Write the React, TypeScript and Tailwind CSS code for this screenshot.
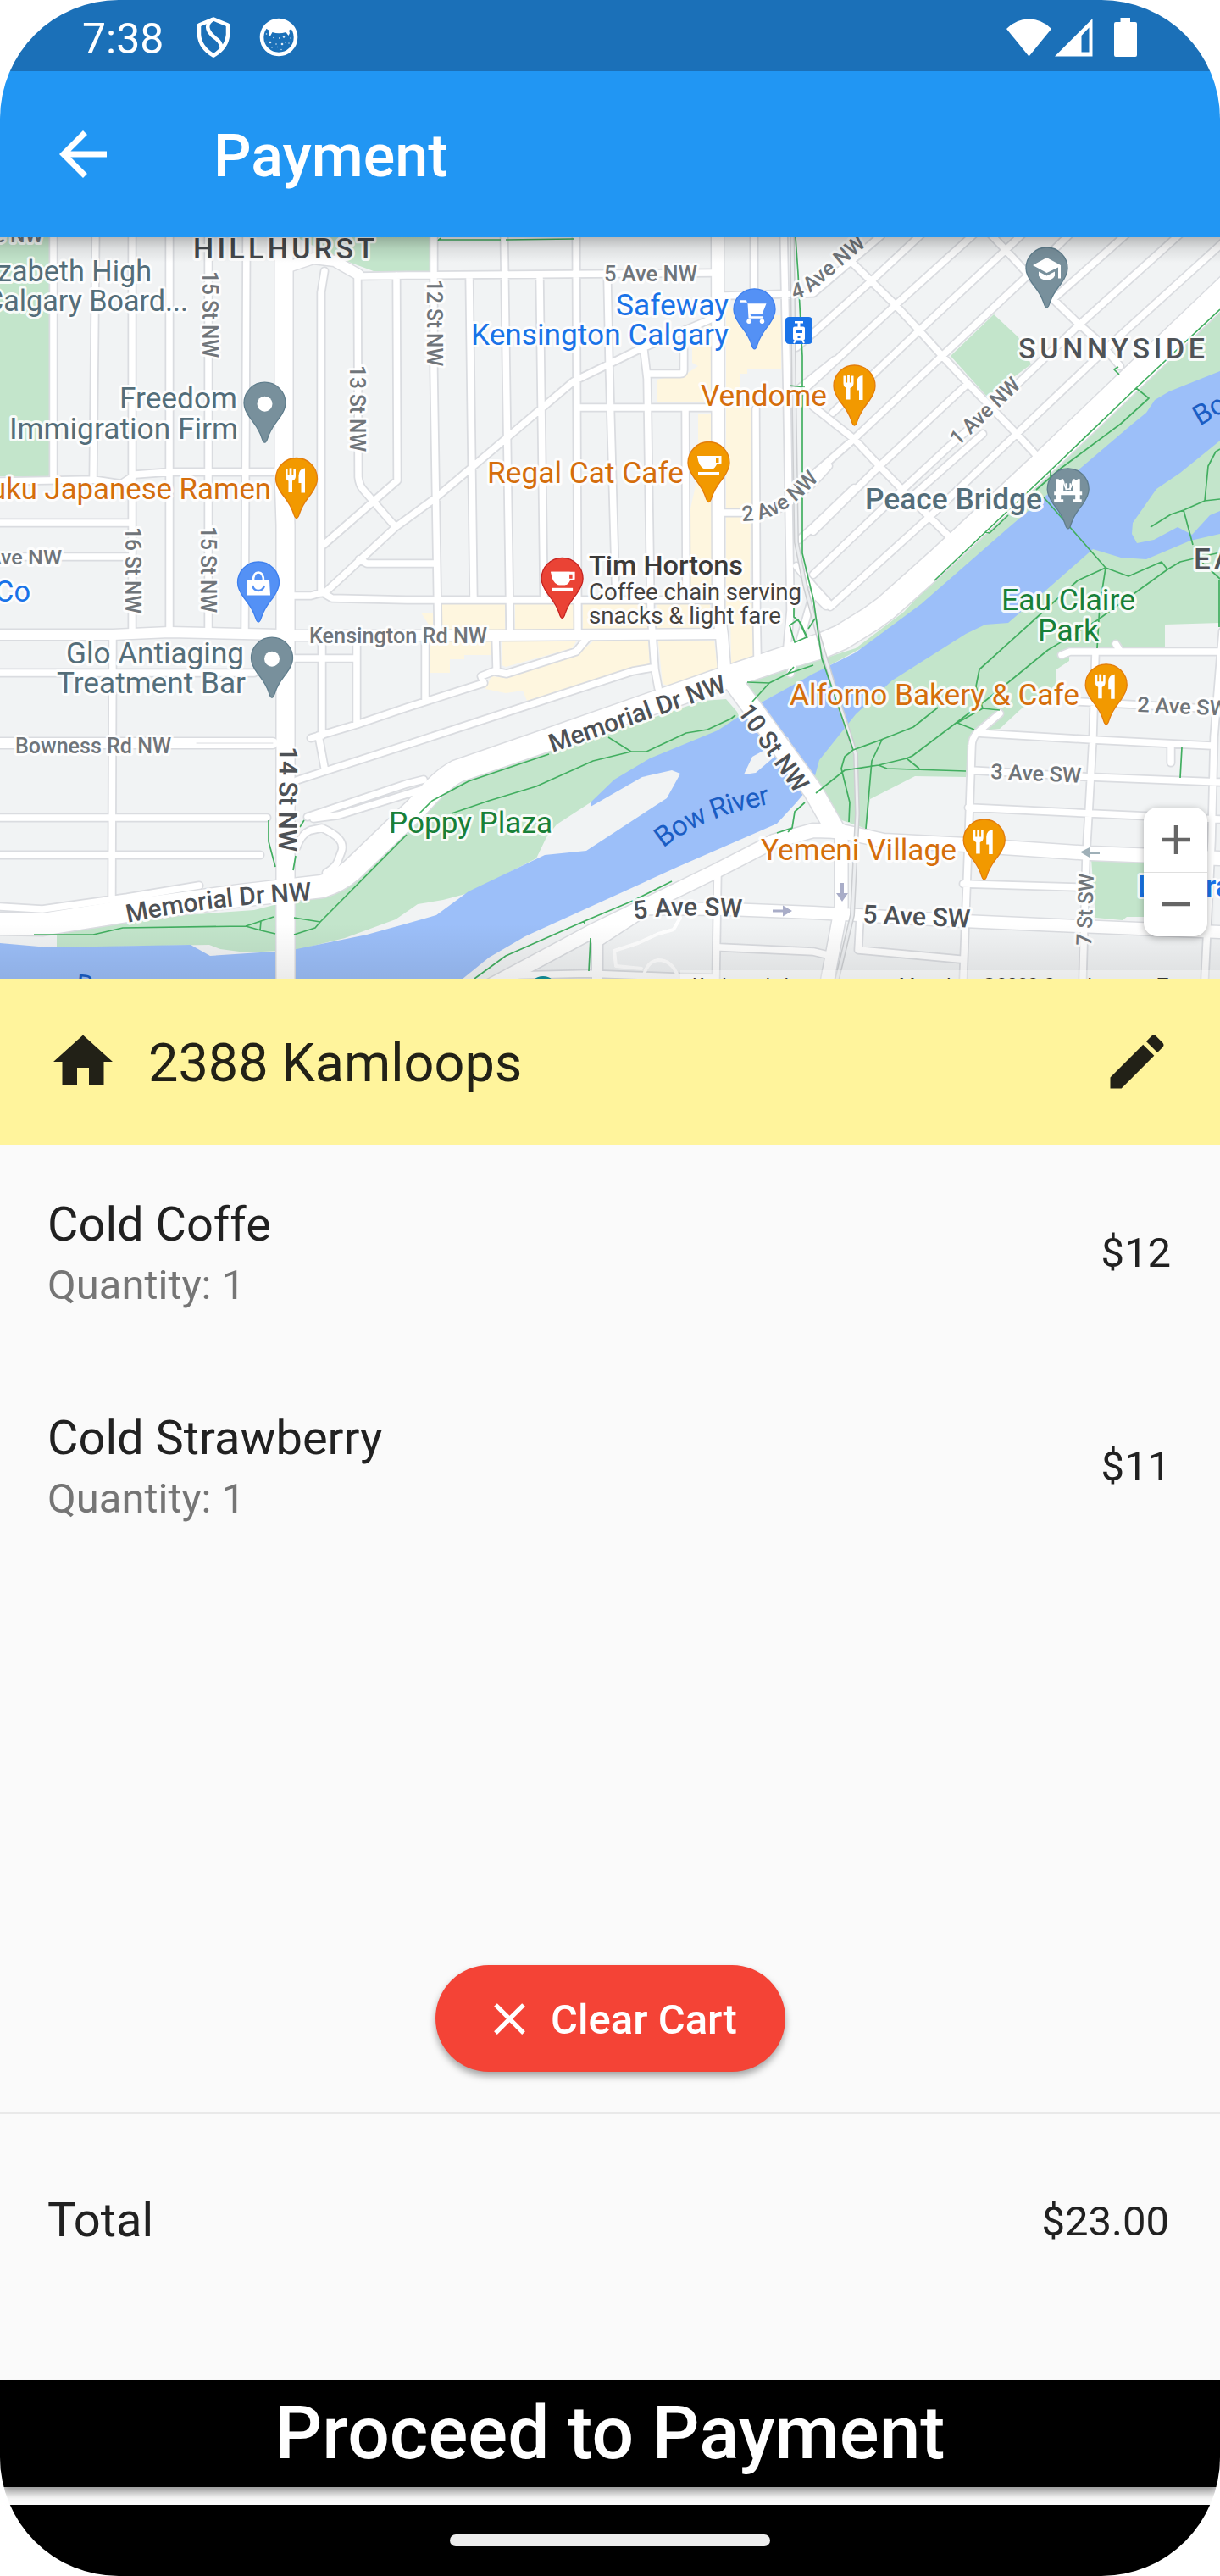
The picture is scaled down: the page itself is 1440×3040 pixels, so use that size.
import React from "react";

/* ---------- map geometry (units are screen pixels, map spans y 280–1155) ---------- */

const minorRoads = [
  "M63 270V565", "M113 270L110 566", "M156 270V745", "M200 270V745", "M246 270V745", "M291 270L289 745",
  "M383 320L379 345V700", "M422 325L423 563Q424 572 428 577L467 622", "M468 325L469 567L382 643",
  "M423 326L480 325L840 322", "M335 557H200L160 560L143 571L110 566L0 568", "M0 617H155", "M0 657H155",
  "M343 703H367L385 698L467 622L515 587L677 450L753 413L850 372", "M385 702L392 706L480 708H843",
  "M424 660L433 665H514", "M512 280V437L517 747", "M554 325L559 707", "M595 270L602 747", "M637 325L642 707",
  "M680 270L682 747", "M717 330L719 427L727 707", "M760 413L764 447L768 720L773 790L777 812",
  "M809 482L810 705", "M890 270V350", "M892 483L893 720L894 775", "M925 270L929 470L933 720L928 775",
  "M855 349L960 346L1040 278", "M682 481H845", "M764 441H803Q807 441 807 437V412", "M855 605H905Q935 600 978 550",
  "M929 470L985 425", "M0 794H300", "M133 755L132 1058", "M0 965H315", "M0 1009H307",
  "M343 777H421", "M380 750V868", "M421 757V855", "M367 871L421 855L480 835L571 806",
  "M502 750V826", "M585 750L586 788", "M571 806L568 798L583 792L598 795L680 769L694 752",
  "M350 921L480 879L747 792L770 788", "M376 868L383 906", "M363 964L480 925L500 920", "M370 966L400 962L500 931",
  "M1003 307L1057 360L1085 390L1112 420L1142 452L1200 512L1223 537", "M960 480L1008 518L1038 550L1065 578L1097 610L1120 633",
  "M1165 272L1187 295L1210 320L1243 353L1273 382L1297 403L1322 432", "M940 668L960 692L980 714",
  "M940 410L960 393L1028 332L1088 276", "M940 468L960 450L1057 360L1150 276", "M983 487L1085 390L1187 295L1207 276",
  "M943 637L962 620L1008 576M960 560L1008 518L1112 420L1210 328L1263 276", "M960 627L1038 550L1142 453",
  "M1243 353L1330 276", "M960 678L1065 578L1120 527L1173 480L1273 384L1393 276", "M980 716L1097 610L1200 512L1320 398L1446 284",
  "M1160 512L1065 596",
  "M1253 773L1263 769H1440", "M1317 760L1322 768", "M1293 770L1290 870L1285 960L1282 1010L1278 1155",
  "M1273 828L1440 837", "M1153 865L1290 873L1430 880", "M1146 909L1287 917L1440 923", "M1143 953L1287 960L1440 967",
  "M1137 1043L1273 1047", "M1180 842L1153 865Q1147 872 1147 880L1143 993L1137 1155",
  "M1443 745L1433 870L1430 993L1422 1155", "M1382 880V900",
  "M847 1030L845 1155", "M850 1118L960 1123L977 1127", "M1015 1085L1013 1121L1133 1132",
  "M350 1000Q356 984 366 980L380 977Q395 984 400 990Q406 997 403 1005L398 1018Q395 1024 385 1030",
  "M610 1151L693 1149L800 1153L845 1154", "M1430 1012L1440 1013", "M0 1070L50 1073L150 1059L235 1045",
  "M933 795L960 700L975 715",
];

const mediumRoads = [
  "M0 749H133L200 746L330 749", "M346 750H585L850 748", "M0 877H322",
  "M343 314L370 305L395 308L423 324",
];

const mainRoads = [
  { d: "M335 270V560L337 620V1160", w: 21 },
  { d: "M847 270L848 720L852 750L856 800", w: 14 },
  { d: "M0 1090L50 1091L150 1075L283 1057L380 1046Q400 1040 415 1027L492 953Q520 920 540 910L647 873L847 803L960 765", w: 26 },
  { d: "M940 771L970 762L993 752L1027 731L1045 718L1110 660L1230 548L1343 440L1450 338", w: 29 },
  { d: "M570 1168L697 1100L847 1027L913 993L960 980L993 981L1043 992L1140 997L1287 1007L1440 1013", w: 16 },
  { d: "M705 1110L763 1072L860 1073L960 1077L1137 1087L1273 1093L1440 1100", w: 14 },
  { d: "M862 800L960 934L985 978", w: 22 },
  { d: "M993 980V1070L976 1160", w: 15 },
  { d: "M705 1095V1160", w: 12 },
];

const river =
  "M0 1113L57 1118L225 1115L248 1128L323 1123L350 1120L433 1103L480 1090L515 1080L553 1052L643 1009L692 1004L787 942L803 913L793 909L758 917L697 952V947L725 920L767 895L847 862L870 847L893 832L960 795L1010 770L1087 713L1190 623L1237 583L1270 557L1337 500L1353 487L1363 472L1380 462L1440 438V520L1393 558L1365 577L1337 617L1336 630L1342 641L1362 637L1390 622L1407 631L1428 608L1440 603V630L1405 638L1353 660L1323 658L1290 648L1233 698L1190 735L1163 737L1140 748L1053 803L1010 843L967 897L960 923L940 947L917 972L800 1023L620 1105L577 1130L545 1156H0Z";

const parks = [
  "M0 280H60V562H0Z",
  "M350 280H507V320H441L395 303Z",
  "M67 1103L150 1085L300 1074L347 1062L383 1060L410 1047L480 976L510 943L553 920L647 888L830 827L857 825L870 840L873 847L847 866L767 900L725 930L697 947L657 973L645 988L633 1013L553 1054L523 1062L493 1067L467 1085L407 1107L350 1121L290 1124L260 1120L247 1115L133 1117L67 1117Z",
  "M882 804L960 781L1010 765L1067 722L1103 683L1240 558L1440 355V520L1100 720L893 832L876 818Z",
  "M1440 500L1300 600L1200 650L1050 790L960 890V930L985 965L1022 978L1027 943L1080 916L1140 917L1150 863L1180 860L1207 835L1247 817V790L1262 780V767L1375 763V737L1440 735Z",
  "M1173 371L1202 398L1217 430L1165 468L1122 420Z",
  "M1288 1013L1350 1015V1082L1330 1082L1325 1086L1293 1083Z",
];

const commercial =
  "M857 360L880 372H922V435H882V441H873V480H887L885 720H857ZM817 398L842 380V475H775V448L812 440L824 432L817 428ZM824 488H842V708H815V600L824 560ZM521 713H596V745H521ZM608 713H677V745H608ZM688 713H765V745H688ZM775 713H838V745H775ZM508 757H580V773H548V778H531V794H508ZM592 757H680L675 765L597 787L592 785ZM700 757H765L767 785L747 788L687 807L622 827L617 815L597 818L573 813L580 798L598 800L680 773ZM777 757H843L847 790L792 810L782 807ZM862 712H890L889 777L863 785ZM497 723H511V745Z";

const footpaths =
  "M40 1103H110L145 1095L290 1093L308 1087L323 1082M290 1093L308 1098L325 1102M308 1087L307 1098M347 1083L378 1088L480 985M533 960L577 945L633 928L700 898L745 887H763L810 865L835 861L863 848L868 844M718 870L745 887M495 960L510 945L553 922L648 890M347 1103L372 1095L378 1088M317 968V993L325 1023M359 968L354 976M349 1010L346 1027M560 1155L597 1128L690 1087L747 1063L793 1040M690 1087V1091M697 1107L695 1146M882 805L908 806L888 828M908 806L930 795L960 785M937 787L930 795M950 947L938 958L935 977L917 983M935 977L930 982M939 280L942 323L947 420V653L953 678L960 707L970 777L1007 885M937 717V728L945 735L953 753M932 738L942 731L952 752L938 758ZM954 742L962 730M1341 458L1356 470L1323 500L1253 552L1223 578M1440 365L1341 458L1237 558L1163 628L1103 685M1163 628L1168 629L1190 608M1240 556V565M1232 587L1305 670L1332 680L1371 663L1378 672L1393 663L1440 652M1378 672L1295 732L1237 767L1188 807L1163 827L1077 892L1070 895L1037 903L997 909L963 936M1305 670L1298 715L1295 765M1305 670L1272 685L1230 723L1156 790L1152 810L1160 836L1180 838M1107 835L1078 858L1040 873L1007 885L997 893L993 907L1003 947L1002 970M1041 873L1029 898L1022 978M1070 895L1085 907M1037 903L1047 907L1140 910M1130 853L1150 861M1160 836L1130 853M1358 622L1382 607L1397 602L1422 591L1440 589M1422 591L1426 550L1435 533L1440 530M1397 602L1408 643M1418 663L1440 683M1439 685V740M1395 882L1393 918M517 284L520 281M517 283H591M597 283L677 282M932 455L950 457M1321 442L1315 436L1320 433";

/* ---------- map labels ---------- */

type Label = {
  t: string; x: number; y: number; w?: number; s: number; c: string; b?: boolean; r?: number; ls?: number; halo?: boolean;
};

const SLATE = "#546e7a", ORANGE = "#d56e0c", BLUE = "#1a73e8", GRAY = "#70757a", DARK = "#4d5156", GREEN = "#188038", WATER = "#1a5dc4";

const labels: Label[] = [
  { t: "Ave NW", x: -35, y: 286, w: 86, s: 24, c: GRAY, b: true },
  { t: "zabeth High", x: -3, y: 332, w: 182, s: 35, c: SLATE },
  { t: "Calgary Board...", x: -18, y: 367, w: 240, s: 35, c: SLATE },
  { t: "Freedom", x: 141, y: 482, w: 139, s: 35, c: SLATE },
  { t: "Immigration Firm", x: 11, y: 518, w: 270, s: 35, c: SLATE },
  { t: "uku Japanese Ramen", x: -12, y: 589, w: 332, s: 35, c: ORANGE },
  { t: "Co", x: -6, y: 710, w: 42, s: 35, c: BLUE },
  { t: "Ave NW", x: -15, y: 666, w: 88, s: 24, c: GRAY, b: true },
  { t: "15 St NW", x: 239, y: 320, w: 102, s: 25, c: GRAY, b: true, r: 90 },
  { t: "13 St NW", x: 413, y: 431, w: 102, s: 25, c: GRAY, b: true, r: 90 },
  { t: "16 St NW", x: 148, y: 622, w: 102, s: 25, c: GRAY, b: true, r: 90 },
  { t: "15 St NW", x: 236.5, y: 621, w: 102, s: 25, c: GRAY, b: true, r: 90 },
  { t: "12 St NW", x: 504, y: 330, w: 102, s: 25, c: GRAY, b: true, r: 90 },
  { t: "14 St NW", x: 330, y: 881, w: 124, s: 30, c: DARK, b: true, r: 90.5 },
  { t: "HILLHURST", x: 228, y: 305, w: 217, s: 34, c: "#45494d", b: true, ls: 3 },
  { t: "SUNNYSIDE", x: 1202, y: 423, w: 223, s: 34, c: "#4f5357", b: true, ls: 3 },
  { t: "EAU", x: 1409, y: 672, s: 35, c: "#4f5357", b: true, ls: 4 },
  { t: "5 Ave NW", x: 713, y: 332, w: 110, s: 25, c: GRAY, b: true },
  { t: "Safeway", x: 727, y: 372, w: 133, s: 35, c: BLUE },
  { t: "Kensington Calgary", x: 556, y: 407, w: 304, s: 35, c: BLUE },
  { t: "Vendome", x: 827, y: 479, w: 149, s: 35, c: ORANGE },
  { t: "Regal Cat Cafe", x: 575, y: 570, w: 232, s: 35, c: ORANGE },
  { t: "Tim Hortons", x: 695, y: 678, w: 182, s: 31, c: "#3c3a38", b: true },
  { t: "Coffee chain serving", x: 695, y: 708, w: 251, s: 27, c: "#45423f" },
  { t: "snacks & light fare", x: 695, y: 736, w: 227, s: 27, c: "#45423f" },
  { t: "1 Ave NW", x: 1131, y: 527, w: 103, s: 25, c: GRAY, b: true, r: -43.5 },
  { t: "Peace Bridge", x: 1021, y: 601, w: 209, s: 35, c: SLATE, b: true },
  { t: "Eau Claire", x: 1182, y: 720, w: 158, s: 35, c: GREEN },
  { t: "Park", x: 1225, y: 756, w: 72, s: 35, c: GREEN },
  { t: "Bow", x: 1416, y: 503, s: 33, c: WATER, r: -30, halo: false },
  { t: "Kensington Rd NW", x: 365, y: 759, w: 210, s: 25, c: GRAY, b: true },
  { t: "Glo Antiaging", x: 78, y: 783, w: 210, s: 35, c: SLATE },
  { t: "Treatment Bar", x: 67, y: 818, w: 223, s: 35, c: SLATE },
  { t: "Bowness Rd NW", x: 18, y: 889, w: 184, s: 25, c: GRAY, b: true },
  { t: "Memorial Dr NW", x: 652, y: 888, w: 219, s: 30, c: DARK, b: true, r: -19.2 },
  { t: "10 St NW", x: 870, y: 840, w: 119, s: 30, c: DARK, b: true, r: 54.5 },
  { t: "Poppy Plaza", x: 459, y: 983, w: 193, s: 35, c: GREEN },
  { t: "5 Ave SW", x: 1018, y: 1089, w: 127, s: 30, c: DARK, b: true, r: 2.5 },
  { t: "2 Ave SW", x: 1342, y: 840, w: 108, s: 25, c: GRAY, b: true, r: 2.5 },
  { t: "3 Ave SW", x: 1169, y: 919, w: 107, s: 25, c: GRAY, b: true, r: 2.5 },
  { t: "Alforno Bakery & Cafe", x: 932, y: 832, w: 342, s: 35, c: ORANGE },
  { t: "Yemeni Village", x: 898, y: 1015, w: 231, s: 35, c: ORANGE },
  { t: "7 St SW", x: 1288, y: 1116, w: 85, s: 25, c: GRAY, b: true, r: -88 },
  { t: "L", x: 1343, y: 1058, s: 35, c: BLUE, b: true },
  { t: "ra", x: 1423, y: 1058, s: 35, c: BLUE, b: true },
];

const curvedLabels = [
  { id: "c1", d: "M876 615L893 614Q938 606 980 548", t: "2 Ave NW", w: 107, s: 25, c: GRAY, halo: true },
  { id: "c2", d: "M937 353Q952 351 968 336L1034 280", t: "4 Ave NW", w: 108, s: 25, c: GRAY, halo: true },
  { id: "c3", d: "M151 1089Q250 1068 372 1062", t: "Memorial Dr NW", w: 219, s: 30, c: DARK, halo: true },
  { id: "c4", d: "M783 1001Q830 962 915 948", t: "Bow River", w: 138, s: 33, c: WATER, halo: false },
  { id: "c5", d: "M749 1085Q800 1077 880 1083", t: "5 Ave SW", w: 127, s: 30, c: DARK, halo: true },
];

/* ---------- map pins ---------- */

type Kind = "dot" | "food" | "cup" | "bag" | "cart" | "cap" | "bridge";

const pins: { x: number; y: number; fill: string; edge: string; kind: Kind }[] = [
  { x: 312.5, y: 475.7, fill: "#78909c", edge: "#5f7d8c", kind: "dot" },
  { x: 350, y: 565, fill: "#f29900", edge: "#e37d0b", kind: "food" },
  { x: 305, y: 687.5, fill: "#5491f5", edge: "#3f80ee", kind: "bag" },
  { x: 321, y: 776.7, fill: "#78909c", edge: "#5f7d8c", kind: "dot" },
  { x: 836.5, y: 546, fill: "#f29900", edge: "#e37d0b", kind: "cup" },
  { x: 890.5, y: 365.3, fill: "#5491f5", edge: "#3f80ee", kind: "cart" },
  { x: 1008.5, y: 455.5, fill: "#f29900", edge: "#e37d0b", kind: "food" },
  { x: 1235.5, y: 316.5, fill: "#78909c", edge: "#5f7d8c", kind: "cap" },
  { x: 1260.7, y: 577.3, fill: "#78909c", edge: "#5f7d8c", kind: "bridge" },
  { x: 1305.7, y: 808.3, fill: "#f29900", edge: "#e37d0b", kind: "food" },
  { x: 1161.7, y: 991.5, fill: "#f29900", edge: "#e37d0b", kind: "food" },
  { x: 663.6, y: 682.8, fill: "#ea4335", edge: "#c5221f", kind: "cup" },
];

function PinGlyph({ kind, hole }: { kind: Kind; hole: string }) {
  switch (kind) {
    case "dot":
      return <circle cy="1" r="9" fill="#fff" />;
    case "food":
      return (
        <g fill="#fff">
          <path d="M-13-12h2.6v8h2v-8.500h2.800v8.500h2v-8h2.600V-3q0 4-4 5.500V16h-4.500V2.500Q-13 1-13-3Z" />
          <path d="M10-12.500V16.500H5.500V5H2.500V-4Q3-12 10-12.500Z" />
        </g>
      );
    case "cup":
      return (
        <g>
          <path d="M-13.500-8H15V0.500Q15 2 13 2H9.500Q7 7.500 3 7.500H-4Q-9-0.500-9-0.500Q-12-3-13.500-8Z" fill="#fff" />
          <path d="M-13.500-8H9V1Q7 7.500 3 7.500H-5Q-12 5-13.500-8Z" fill="#fff" />
          <path d="M8.500-5H12V0H8.500Z" fill={hole} />
          <path d="M-12.500 11H12.500V14.500H-12.500Z" fill="#fff" />
        </g>
      );
    case "bag":
      return (
        <g>
          <path d="M-6-2Q-6-12 0-12Q6-12 6-2" fill="none" stroke="#fff" strokeWidth="2.600" />
          <path d="M-13-2.500H13L14 15H-14Z" fill="#fff" />
          <path d="M-7 3.500Q-5.500 9.500 0 9.500Q5.500 9.500 7 3.500" fill="none" stroke={hole} strokeWidth="2.600" />
        </g>
      );
    case "cart":
      return (
        <g fill="#fff">
          <path d="M-16.500-11H-9.500L-8.500-7H14L9 5.500H-5L-4 8H10V10.500H-7L-8-7.500-11-8.500H-16.500Z" />
          <circle cx="-6.500" cy="14" r="2.700" />
          <circle cx="9" cy="14" r="2.700" />
        </g>
      );
    case "cap":
      return (
        <g fill="#fff">
          <path d="M-16.500-3.500L0-12.500L16.500-3.500V12H13.500V-1L0 5.500Z" />
          <path d="M-9.500 4L0 9L9.500 4V9Q7 14 0 14Q-7 14-9.500 9Z" />
        </g>
      );
    case "bridge":
      return (
        <g fill="#fff">
          <path d="M-14-12h3v1.500h3V-12h2.500V2H5.500V-12H8v1.500h3V-12h3V3h2.500v4H14v5h2v3H5.500v-3h3V7H-8.500v5h3v3H-16.500v-3h2V7H-16.500V3H-14Z" />
          <path d="M-5.500-10Q-4 0 0 0Q4 0 5.500-10" fill="none" stroke="#fff" strokeWidth="1.600" />
          <path d="M-2.500-7V1M2.500-7V1" stroke="#fff" strokeWidth="1.600" />
        </g>
      );
  }
}

function StreetMap() {
  return (
    <svg viewBox="0 280 1440 875" className="block h-[875px] w-[1440px]" fontFamily="Roboto, sans-serif">
      <defs>
        <linearGradient id="topShade" x1="0" x2="0" y1="0" y2="1">
          <stop offset="0" stopColor="#000" stopOpacity=".24" />
          <stop offset=".45" stopColor="#000" stopOpacity=".08" />
          <stop offset="1" stopColor="#000" stopOpacity="0" />
        </linearGradient>
        <linearGradient id="bottomShade" x1="0" x2="0" y1="0" y2="1">
          <stop offset="0" stopColor="#000" stopOpacity="0" />
          <stop offset="1" stopColor="#000" stopOpacity=".08" />
        </linearGradient>
      </defs>
      <rect y="280" width="1440" height="875" fill="#f1f3f4" />
      <path d={parks.join("")} fill="#c3e5cb" />
      <path d={commercial} fill="#fef6df" />
      <path d={river} fill="#9cbff9" />
      <path d="M878 914L888 893L930 870L933 877L892 912Z" fill="#f1f3f4" />
      <g fill="none" strokeLinejoin="round" strokeLinecap="round">
        <g stroke="#dadce0">
          <path d={minorRoads.join("")} strokeWidth="11" />
          <path d={mediumRoads.join("")} strokeWidth="15" />
          {mainRoads.map((r) => <path key={r.d} d={r.d} strokeWidth={r.w + 3} />)}
        </g>
        <g stroke="#fff">
          <path d={minorRoads.join("")} strokeWidth="7.500" />
          <path d={mediumRoads.join("")} strokeWidth="12" />
          {mainRoads.map((r) => <path key={r.d} d={r.d} strokeWidth={r.w} />)}
          <path d="M803 1083L795 1097L777 1102L753 1113L725 1122L727 1140L757 1143M760 1150Q765 1134 777 1133Q793 1133 800 1152" strokeWidth="4" />
        </g>
        <path d="M232 877H322" stroke="#dadce0" strokeWidth="1" />
        <path d="M935 270L937 455L940 640L950 690L966 750L987 820L1010 890L1012 960L1006 1080L987 1160" stroke="#cdcfd2" strokeWidth="6" />
        <path d="M935 270L937 455L940 640L950 690L966 750L987 820L1010 890L1012 960L1006 1080L987 1160" stroke="#eceef0" strokeWidth="3" />
        <path d={footpaths} stroke="#42ae60" strokeWidth="1.700" strokeLinecap="butt" />
      </g>
      <path d="M912 1073.500h12v-5l11 6.500-11 6.500v-5h-12Z" fill="#a9adc8" />
      <path d="M1298 1005h-12v-5l-11 5.500 11 6.500v-4h12Z" fill="#9fb0b8" />
      <path d="M992 1042h4v12h5l-7 10-7-10h5Z" fill="#a9adc8" />
      {curvedLabels.map((l) => (
        <g key={l.id}>
          <path id={l.id} d={l.d} fill="none" />
          <text fontSize={l.s} fontWeight={l.halo ? 500 : 400} fill={l.c} stroke={l.halo ? "#fff" : "none"} strokeOpacity=".9" strokeWidth="6" strokeLinejoin="round" paintOrder="stroke" textLength={l.w}>
            <textPath href={"#" + l.id} textLength={l.w}>{l.t}</textPath>
          </text>
        </g>
      ))}
      {labels.map((l, i) => (
        <text
          key={i} x={l.x} y={l.y} fontSize={l.s} fontWeight={l.b ? 500 : 400} fill={l.c} textLength={l.w} letterSpacing={l.ls}
          lengthAdjust={l.ls ? "spacing" : "spacingAndGlyphs"}
          transform={l.r ? `rotate(${l.r} ${l.x} ${l.y})` : undefined}
          stroke={l.halo === false ? "none" : "#fff"} strokeOpacity=".88" strokeWidth="6" strokeLinejoin="round" paintOrder="stroke"
        >
          {l.t}
        </text>
      ))}
      <rect x="927" y="374" width="32" height="32" rx="4.500" fill="#1a73e8" />
      <g>
        <path d="M938 379h10v2.500h-3.500v4H948q2 0 2 2v12q0 2-2 2h-10q-2 0-2-2v-12q0-2 2-2h3.500v-4H938Z" fill="#fff" />
        <path d="M939 389h8v4h-8ZM941.500 396h3v3h-3Z" fill="#1a73e8" />
        <path d="M939 401l-2 4M947 401l2 4" stroke="#fff" strokeWidth="2" />
      </g>
      {pins.map((p) => (
        <g key={p.x} transform={`translate(${p.x} ${p.y})`}>
          <path d="M0 46.500C-2 46.500-2.500 44-3.500 41C-7 30-11 26-17 18C-22 11-24.500 6-24.500 0A24.500 24.500 0 1 1 24.500 0C24.500 6 22 11 17 18C11 26 7 30 3.500 41C2.500 44 2 46.500 0 46.500Z" fill={p.fill} stroke={p.edge} strokeWidth="1.300" />
          <PinGlyph kind={p.kind} hole={p.fill} />
        </g>
      ))}
      <circle cx="641" cy="1169" r="17" fill="#12919c" />
      <text x="89" y="1172" fontSize="32" fill={WATER} transform="rotate(6 89 1172)">Bow River</text>
      <rect y="1090" width="1440" height="65" fill="url(#bottomShade)" />
      <rect x="803" y="1145" width="637" height="10" fill="#fff" fillOpacity=".35" />
      <g fontSize="22" fill="#333">
        <text x="817" y="1170">Keyboard shortcuts</text>
        <text x="1061" y="1170">Map data ©2023 Google</text>
        <text x="1366" y="1170">Terms</text>
      </g>
      <rect y="280" width="1440" height="30" fill="url(#topShade)" />
    </svg>
  );
}

function ZoomControl() {
  return (
    <div className="absolute right-[15px] bottom-[50px] flex h-[152px] w-[75px] flex-col rounded-[16px] bg-white shadow-[0_2px_8px_rgba(0,0,0,0.3)]">
      <div className="flex flex-1 items-center justify-center border-b border-[#dfdfdf]">
        <svg viewBox="0 0 34 34" className="h-[34px] w-[34px]"><path d="M17 0V34M0 17H34" stroke="#666" strokeWidth="4.500" /></svg>
      </div>
      <div className="flex flex-1 items-center justify-center">
        <svg viewBox="0 0 34 34" className="h-[34px] w-[34px]"><path d="M0 17H34" stroke="#666" strokeWidth="4.500" /></svg>
      </div>
    </div>
  );
}

function MaterialIcon({ d, className }: { d: string; className: string }) {
  return (
    <svg viewBox="0 0 24 24" className={className} fill="currentColor"><path d={d} /></svg>
  );
}

function StatusBar() {
  return (
    <div className="flex h-[84px] items-center bg-[#1b70b8] pr-[98px] pl-[97px] text-white">
      <span className="w-[135px] pt-[7px] text-[50px] leading-none">7:38</span>
      <svg viewBox="0 0 40 50" className="mt-[4px] h-[50px] w-[40px]" fill="none" stroke="#fff" strokeWidth="4.500" strokeLinejoin="round">
        <path d="M20 3.500L37 10.500V22Q36 37 20 46.500Q4 37 3 22V10.500Z" />
        <path d="M19 4Q12 8 13.500 15Q15 20 21 25Q30 31 29.500 39" />
      </svg>
      <svg viewBox="0 0 46 46" className="mt-[4px] ml-[34px] h-[46px] w-[46px]">
        <circle cx="23" cy="23" r="20" fill="none" stroke="#fff" strokeWidth="4.600" />
        <path d="M7 12Q12 3 23 3T39 12Q38 13 35 15L36 18L34.500 21L31.500 17Q23 19.500 15.500 17L13 21.500L11 20L12 15Q8 12.500 7 12Z" fill="#fff" />
        <g fill="#fff" fillOpacity=".85">
          <circle cx="8.500" cy="19" r=".8" /><circle cx="17" cy="23.500" r=".8" /><circle cx="24" cy="24" r=".9" /><circle cx="29" cy="22.500" r="1.200" />
          <circle cx="13" cy="29" r="1.300" /><circle cx="8" cy="28.500" r=".7" /><circle cx="20" cy="31" r=".8" /><circle cx="27" cy="31" r="1.300" />
          <circle cx="31" cy="29" r=".7" /><circle cx="35" cy="30" r=".7" /><circle cx="15" cy="35" r=".7" /><circle cx="21.500" cy="34.500" r=".7" />
          <circle cx="37" cy="24" r=".7" /><circle cx="26" cy="37.500" r=".7" />
        </g>
      </svg>
      <div className="ml-auto flex items-center pt-[4px]">
        <svg viewBox="0 0 53 45" className="h-[45px] w-[53px]"><path d="M26.500 44.500L0 12Q11 .5 26.500 .5T53 12Z" fill="#fff" /></svg>
        <svg viewBox="0 0 45 45" className="ml-[4px] h-[45px] w-[45px]"><path fillRule="evenodd" d="M44.500 0V44.500H0ZM40.500 10.500L31.500 20V39.500H40.500Z" fill="#fff" /></svg>
        <svg viewBox="0 0 27 46" className="ml-[25px] h-[46px] w-[27px]"><path d="M7.500 0H19V5H25Q27 5 27 7V44Q27 46 25 46H2Q0 46 0 44V7Q0 5 2 5H7.500Z" fill="#fff" /></svg>
      </div>
    </div>
  );
}

const items = [
  { name: "Cold Coffe", quantity: 1, price: "$12" },
  { name: "Cold Strawberry", quantity: 1, price: "$11" },
];

export default function App() {
  return (
    <div className="w-[1440px] bg-white">
      <div className="flex h-[3040px] w-[1440px] flex-col overflow-hidden rounded-[140px] bg-[#fafafa] font-['Roboto',sans-serif] text-[#212121]">
        <StatusBar />
        <header className="flex h-[196px] items-center bg-[#2196f3] pl-[56px] text-white">
          <MaterialIcon className="h-[84px] w-[84px]" d="M20 11H7.830l5.590-5.590L12 4l-8 8 8 8 1.410-1.410L7.830 13H20v-2z" />
          <h1 className="ml-[112px] pt-[4px] text-[70px] leading-none font-medium">Payment</h1>
        </header>

        <div className="relative h-[875px]">
          <StreetMap />
          <ZoomControl />
        </div>

        <div className="flex h-[196px] items-center bg-[#fff49c] px-[56px] text-[#222117]">
          <MaterialIcon className="h-[84px] w-[84px]" d="M10 20v-6h4v6h5v-8h3L12 3 2 12h3v8z" />
          <span className="ml-[35px] flex-1 pt-[2px] text-[63px] leading-none">2388 Kamloops</span>
          <MaterialIcon className="h-[84px] w-[84px]" d="M3 17.250V21h3.750L17.810 9.940l-3.750-3.750L3 17.250zM20.710 7.040c.39-.39.39-1.020 0-1.410l-2.340-2.340c-.39-.39-1.020-.39-1.410 0l-1.830 1.830 3.750 3.750 1.830-1.830z" />
        </div>

        <ul className="h-[947px]">
          {items.map((item) => (
            <li key={item.name} className="flex h-[252px] items-center justify-between pr-[58px] pl-[56px]">
              <div className="pt-[4px]">
                <p className="text-[56px] leading-[66px]">{item.name}</p>
                <p className="mt-[10px] text-[49px] leading-[58px] text-[#757575]">Quantity: {item.quantity}</p>
              </div>
              <span className="pt-[2px] text-[49px] leading-none">{item.price}</span>
            </li>
          ))}
        </ul>

        <div className="flex h-[168px] items-center justify-center">
          <button className="flex h-[126px] w-[413px] items-center rounded-full bg-[#f44336] pl-[56px] text-white shadow-[0_5px_9px_rgba(0,0,0,0.35)]">
            <MaterialIcon className="h-[63px] w-[63px]" d="M19 6.410L17.590 5 12 10.590 6.410 5 5 6.410 10.590 12 5 17.590 6.410 19 12 13.410 17.590 19 19 17.590 13.410 12z" />
            <span className="ml-[17.5px] pt-[2px] text-[49px] leading-none font-medium whitespace-nowrap">Clear Cart</span>
          </button>
        </div>
        <div className="mt-[26px] h-[3px] bg-[#e9e9e9]" />
        <div className="mt-[27px] flex h-[196px] items-center justify-between pr-[60px] pl-[56px]">
          <span className="text-[56px] leading-none">Total</span>
          <span className="pt-[2px] text-[49px] leading-none">$23.00</span>
        </div>

        <button className="mt-auto flex h-[126px] shrink-0 items-center justify-center bg-black text-[87.5px] leading-none font-medium text-white shadow-[0_8px_10px_-2px_rgba(0,0,0,0.42)]">
          Proceed to Payment
        </button>
        <div className="h-[21px] shrink-0" />
        <div className="relative flex h-[84px] shrink-0 items-center justify-center bg-black">
          <div className="h-[14px] w-[378px] rounded-full bg-[#ececec]" />
        </div>
      </div>
    </div>
  );
}
